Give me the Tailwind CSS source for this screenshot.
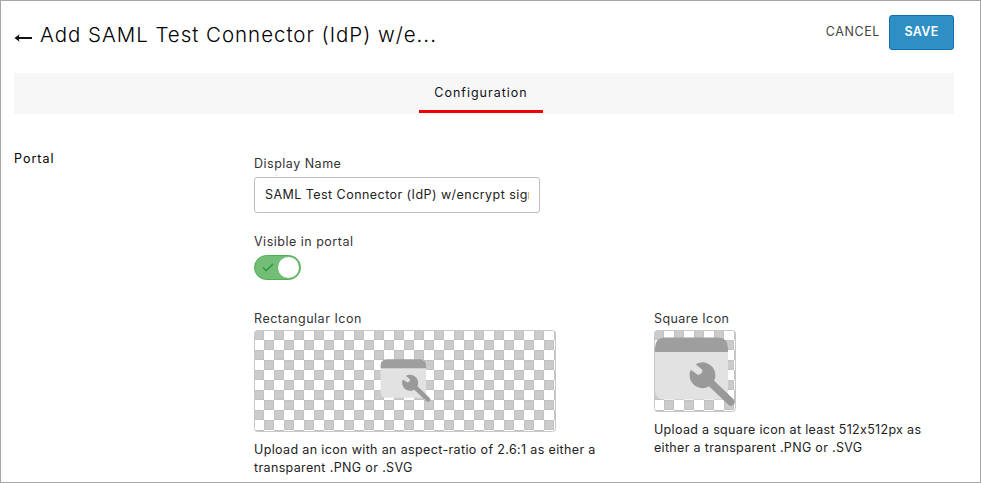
<!DOCTYPE html>
<html lang="en">
<head>
<meta charset="utf-8">
<title>Add SAML Test Connector</title>
<script src="https://cdn.jsdelivr.net/npm/@tailwindcss/browser@4"></script>
</head>
<body class="h-[483px] w-[981px] overflow-hidden border border-[#a6a6a6] bg-white pl-[13px] pr-[26px] font-['Inter',sans-serif] text-[12.5px] leading-[18px] text-[#222]">
  <header class="flex h-[72px] items-start">
    <svg class="mt-[31px] h-[12px] w-[19px]" viewBox="0 0 19 12" fill="none"><path d="M18 6H3" stroke="#111" stroke-width="2"/><path d="M0.500 6 5.500 2.300 4.600 6 5.500 9.700Z" fill="#111"/></svg>
    <h1 class="ml-[7px] mt-[20px] whitespace-nowrap text-[20.5px] font-light leading-[28px] tracking-[0.97px] text-black">Add SAML Test Connector (IdP) w/e...</h1>
    <div class="ml-auto flex items-start">
      <button class="mt-[22px] whitespace-nowrap text-[12.5px] leading-[18px] tracking-[0.6px] text-[#444]">CANCEL</button>
      <button class="ml-[9px] mt-[14px] h-[35px] w-[65px] rounded-[3px] border border-[#0f6fb0] bg-[#2e8fc5] pb-px text-[12.5px] font-semibold leading-[18px] tracking-[0.3px] text-white">SAVE</button>
    </div>
  </header>
  <nav class="flex h-[41px] justify-center bg-[#f7f7f7]">
    <a class="mr-[6px] h-[40px] w-[124px] border-b-[3px] border-[#f00000] pt-[11px] text-center tracking-[1px] text-[#111]">Configuration</a>
  </nav>
  <main class="flex pt-[36px]">
    <h2 class="w-[240px] tracking-[1px] text-black">Portal</h2>
    <div class="pt-[5px]">
      <label class="block tracking-[0.5px] text-[#333]">Display Name</label>
      <div class="mt-[4px] h-[36px] w-[286px] rounded-[3px] border border-[#bdbdbd] px-[10px] pt-[8px]">
        <div class="overflow-hidden whitespace-nowrap tracking-[0.45px]">SAML Test Connector (IdP) w/encrypt sign assertion</div>
      </div>
      <label class="mt-[20px] block tracking-[0.5px] text-[#333]">Visible in portal</label>
      <div class="mt-[4px] flex h-[25px] w-[47px] items-center justify-between rounded-full border border-[#4caf50] bg-[#73be76] pl-[7px]">
        <svg class="h-[9px] w-[12px]" viewBox="0 0 12 9" fill="none"><path d="M1 4.500 4.200 7.600 11 1" stroke="#3b9440" stroke-width="1.500"/></svg>
        <span class="mr-[1px] size-[21px] rounded-full bg-white"></span>
      </div>
      <div class="mt-[30px] flex">
        <section class="w-[400px]">
          <h3 class="tracking-[0.52px] text-[#333]">Rectangular Icon</h3>
          <svg class="mt-[2px] h-[102px] w-[302px]" viewBox="0 0 302 102">
            <defs>
              <pattern id="check" width="20" height="20" patternUnits="userSpaceOnUse"><rect width="20" height="20" fill="#fff"/><path d="M0 0H10V10H0ZM10 10H20V20H10Z" fill="#cbcbcb"/><path d="M.5 .5H9.5V9.5H.5ZM10.5 10.5H19.5V19.5H10.5Z" fill="none" stroke="#c2c2c2"/></pattern>
              <symbol id="app" viewBox="0 0 82 74"><path d="M1 13H74V62.500H11Q1 62.500 1 53Z" fill="#e2e2e2"/><path d="M1 15V11Q1 .5 11 .5H64Q74 .5 74 11V15Z" fill="#9e9e9e"/><path d="M56 45 77 65" stroke="#999" stroke-width="7.500" stroke-linecap="round"/><path d="M41.700 27.300 48.500 33Q48.500 36.800 44 38L36.800 32.800A12.900 12.900 0 1 0 41.700 27.300Z" fill="#999"/></symbol>
            </defs>
            <rect x=".5" y=".5" width="301" height="101" rx="3" fill="url(#check)" stroke="#c8c8c8"/>
            <use href="#app" x="126" y="29" width="51" height="46"/>
          </svg>
          <p class="mt-[9px] whitespace-nowrap tracking-[0.36px]">Upload an icon with an aspect-ratio of 2.6:1 as either a<br>transparent .PNG or .SVG</p>
        </section>
        <section>
          <h3 class="tracking-[0.42px] text-[#333]">Square Icon</h3>
          <svg class="mt-[2px] h-[82px] w-[82px]" viewBox="0 0 82 82">
            <rect x=".5" y=".5" width="81" height="81" rx="3" fill="url(#check)" stroke="#c8c8c8"/>
            <use href="#app" x="0" y="7" width="82" height="74"/>
          </svg>
          <p class="mt-[9px] whitespace-nowrap tracking-[0.32px]">Upload a square icon at least 512x512px as<br>either a transparent .PNG or .SVG</p>
        </section>
      </div>
    </div>
  </main>
</body>
</html>
